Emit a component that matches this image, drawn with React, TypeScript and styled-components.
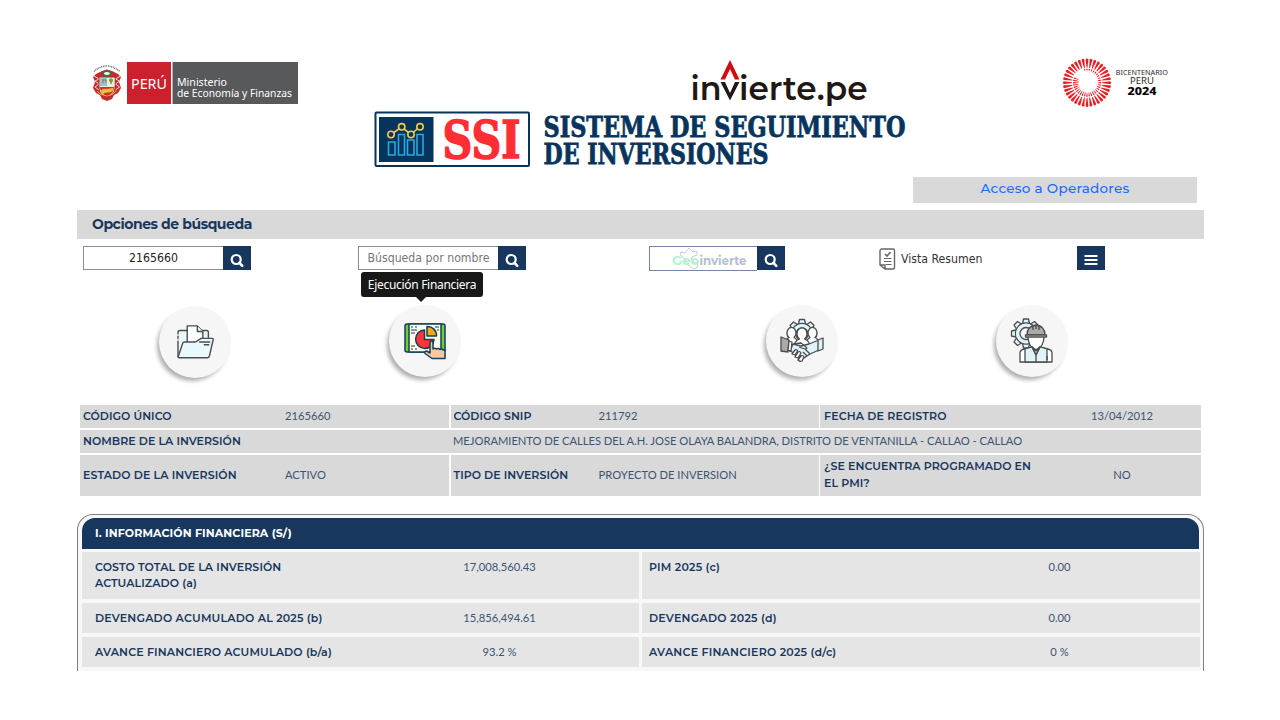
import React from 'react';
import styled, { createGlobalStyle } from 'styled-components';

const navy = '#17375e';
const gotham = "Gotham, Montserrat, Inter, 'Liberation Sans', sans-serif";
const lato = "Lato, 'Liberation Sans', sans-serif";
const tahoma = "Tahoma, 'DejaVu Sans Condensed', 'DejaVu Sans', sans-serif";

const GlobalStyle = createGlobalStyle`
  * { box-sizing: border-box; }
  body { margin: 0; background: #fff; }
  svg { display: block; flex: none; overflow: visible; }
`;

const Page = styled.div`
  width: 1280px;
  height: 671px;
  overflow: hidden;
  padding: 57px 76px 0 77px;
  background: #fff;
  color: ${navy};
  font-family: ${gotham};
`;

const Header = styled.header`
  display: flex;
  justify-content: space-between;
  align-items: flex-start;
  height: 120px;
  padding: 0 35px 0 15px;
`;
const Ministry = styled.div`
  width: 207px;
  height: 44px;
  margin-top: 4px;
`;
const Brand = styled.div`
  display: flex;
  flex-direction: column;
  align-items: flex-end;
  width: 535px;
  margin-right: 81px;
`;
const InvierteBox = styled.div`
  height: 53px;
  margin-right: 41px;
`;
const AccessRow = styled.div`
  display: flex;
  justify-content: flex-end;
  padding-right: 7px;
`;
const AccessLink = styled.a`
  width: 284px;
  height: 26px;
  line-height: 23px;
  text-align: center;
  background: #d9d9d9;
  color: #1a6bff;
  font-size: 13.5px;
  font-weight: 500;
  letter-spacing: 0.27px;
`;
const SectionBar = styled.h2`
  margin: 7px 0;
  height: 29px;
  padding-left: 15px;
  line-height: 28px;
  background: #d9d9d9;
  font-size: 14px;
  font-weight: 700;
  letter-spacing: -0.44px;
`;

const SearchRow = styled.div`
  display: flex;
  height: 26px;
  padding-left: 6px;
  font-family: ${tahoma};
  font-size: 12.2px;
`;
const SearchGroup = styled.div<{ $gap: number }>`
  display: flex;
  margin-right: ${p => p.$gap}px;
`;
const Field = styled.input`
  width: 140px;
  height: 24px;
  padding: 0 3px;
  border: 1px solid #8d8d8d;
  border-right: 0;
  outline: 0;
  color: #222;
  text-align: center;
  font: 12.2px ${tahoma};
  &::placeholder { color: #777; opacity: 1; }
`;
const GeoField = styled.div`
  width: 108px;
  height: 25px;
  border: 1px solid #7188a8;
  border-right: 0;
`;
const SquareButton = styled.button`
  display: flex;
  align-items: center;
  justify-content: center;
  width: 28px;
  height: 24px;
  padding: 4px 0 0;
  border: 0;
  background: ${navy};
`;
const Summary = styled.div`
  display: flex;
  align-items: center;
  gap: 5px;
  width: 198px;
  color: #333;
`;

const Shortcuts = styled.nav`
  display: flex;
  height: 130.5px;
  padding: 33px 0 0 82px;
`;
const Circle = styled.div<{ $gap?: number; $drop?: number }>`
  position: relative;
  display: flex;
  align-items: center;
  justify-content: center;
  flex: none;
  width: 72px;
  height: 72px;
  margin: ${p => p.$drop || 0}px ${p => p.$gap || 0}px 0 0;
  border-radius: 50%;
  background: #f6f6f6;
  box-shadow: -3px 4px 4px -1px rgba(0, 0, 0, 0.32);
`;
const Tooltip = styled.div`
  position: absolute;
  left: -28px;
  top: -33px;
  width: 122px;
  height: 25px;
  border-radius: 3px;
  background: #181818;
  color: #fff;
  text-align: center;
  white-space: nowrap;
  font: 12px/25px 'Segoe UI', 'Noto Sans', sans-serif;
  letter-spacing: -0.3px;
  &::after {
    content: '';
    position: absolute;
    left: 55px;
    top: 25px;
    border: 5px solid transparent;
    border-top-color: #181818;
    border-bottom: 0;
  }
`;

const InfoTable = styled.section`
  display: grid;
  grid-template-columns: 369px 368px 381px;
  grid-template-rows: 23px 23px 41px;
  gap: 2px 1.5px;
  margin: 2px 0 0 3px;
`;
const InfoCell = styled.div<{ $label: number; $wide?: boolean; $center?: boolean }>`
  display: grid;
  grid-template-columns: ${p => p.$label}px 1fr;
  grid-column: ${p => (p.$wide ? '1 / -1' : 'auto')};
  align-items: center;
  padding-left: ${p => (p.$center ? 4 : 3)}px;
  padding-right: ${p => (p.$center ? 3 : 0)}px;
  background: #d9d9d9;
  text-align: ${p => (p.$center ? 'center' : 'left')};
`;
const Label = styled.div<{ $track?: number }>`
  font-size: 11px;
  line-height: 16.8px;
  font-weight: 600;
  letter-spacing: ${p => p.$track ?? 0.04}px;
  white-space: pre-line;
  text-align: left;
`;
const Value = styled.div<{ $track?: number }>`
  font: 11.2px/16px ${lato};
  letter-spacing: ${p => p.$track ?? 0}px;
  color: #3b5473;
  white-space: nowrap;
`;

const Panel = styled.section`
  height: 180px;
  margin: 18px 0 0;
  width: 1127px;
  padding: 3px 4px 0;
  border: 1.5px solid #808080;
  border-bottom: 0;
  border-radius: 16px 16px 0 0;
  background: #f8f8f8;
`;
const PanelTitle = styled.h3`
  height: 31px;
  margin: 0 0 3px;
  padding-left: 13px;
  line-height: 31px;
  border-radius: 13px 13px 0 0;
  background: ${navy};
  color: #fff;
  font-size: 11px;
  font-weight: 700;
  letter-spacing: 0.12px;
`;
const Finance = styled.div`
  display: grid;
  grid-template-columns: 557px 558px;
  grid-template-rows: 47px 30px 30px;
  gap: 4px 3px;
`;
const FinanceCell = styled.div<{ $right?: boolean }>`
  display: grid;
  grid-template-columns: ${p => (p.$right ? '276px 1fr' : '277px 1fr')};
  align-items: start;
  padding: ${p => (p.$right ? '7px 6px 0 7px' : '7px 12px 0 13px')};
  background: #e5e5e5;
  text-align: center;
`;

const MinistryLogo = () => (
  <svg width="207" height="44" viewBox="92 61 207 44">
    <rect x="127" y="62" width="44" height="42" fill="#cc202c" />
    <rect x="172.500" y="62" width="125.500" height="42" fill="#58595b" />
    <path d="M94 71.500q12-11 26 0" fill="none" stroke="#777" strokeWidth="1.600" strokeDasharray="1 .7" />
    <path d="M96 74l6-3 5-1.500 5 1.500 6 3 3 3-2 5 2 6-3 5-4 2-2 4-5 2-5-2-2-4-4-2-3-5 2-6-2-5z" fill="#c52a2d" />
    <path d="M94 76l5 3-4 2 4 3-4 3 4 3M120.500 76l-5 3 4 2-4 3 4 3-4 3" fill="none" stroke="#f3dcd2" strokeWidth="1" />
    <path d="M99 77h16v11q0 7-8 9-8-2-8-9z" fill="#f3e8df" stroke="#a52f24" />
    <path d="M100 78h7v8h-7z" fill="#8cc6dd" />
    <path d="M107.500 78h7v8h-7z" fill="#e9eddc" />
    <path d="M100 87h14q0 7-7 9-6-2-7-8z" fill="#cf2b27" />
    <path d="M103 83v-4m3 4v-3h-3" stroke="#a3702f" fill="none" />
    <path d="M111 84v-3" stroke="#775327" />
    <circle cx="111" cy="80.300" r="2" fill="#67a344" />
    <path d="M100.500 93q1-5 5-4l8-1q0 4-5 4.500-5 0-6 2" fill="#e7bf3b" />
    <ellipse cx="107" cy="73.500" rx="3.800" ry="2.300" fill="#fff" stroke="#28764b" strokeWidth="1.600" />
    <path d="M97 91q3 4 7 4m12-4q-3 4-6 4" fill="none" stroke="#e3ae43" />
    <g fill="#fff" fontFamily="'Noto Sans'">
      <text x="131" y="88.500" fontSize="15" textLength="36" lengthAdjust="spacingAndGlyphs">PERÚ</text>
      <text x="177" y="86.300" fontSize="11.200" textLength="50" lengthAdjust="spacingAndGlyphs">Ministerio</text>
      <text x="177" y="97" fontSize="11.200" textLength="115" lengthAdjust="spacingAndGlyphs">de Economía y Finanzas</text>
    </g>
  </svg>
);

const InvierteLogo = () => (
  <svg width="176" height="50" viewBox="691 57 176 50">
    <g fill="#211814" fontFamily="Montserrat, Inter" fontWeight="600" fontSize="33">
      <text x="690.500" y="99.500" textLength="31" lengthAdjust="spacingAndGlyphs">in</text>
      <text x="739" y="99.500" textLength="128.500" lengthAdjust="spacingAndGlyphs">ierte.pe</text>
    </g>
    <path d="M720.500 82h4.500l5 11 5-11h4.500L730 100.500z" fill="#211814" />
    <path d="M720.500 79.500L730 60l9.500 19.500H735L730 69l-5 10.500z" fill="#d20a11" />
  </svg>
);

const SystemLogo = () => (
  <svg width="535" height="58" viewBox="373 110 535 58">
    <rect x="375.500" y="112.500" width="153.500" height="53.500" rx="1" fill="#fff" stroke="#07345c" strokeWidth="2" />
    <rect x="379" y="117" width="54.500" height="45" fill="#07345c" />
    <g fill="none" stroke="#27a9e1" strokeWidth="1.600">
      <path d="M388.500 142h6.500v13h-6.500zM398.500 134.500h6v20.500h-6zM407.500 140h6.500v15h-6.500zM417 134.500h6V155h-6z" />
    </g>
    <g stroke="#f4cb3d" strokeWidth="1.600">
      <path d="M391 134.500l10.500-7.500 9.500 7.500 9-8" fill="none" />
      <g fill="#07345c">
        <circle cx="391" cy="134.500" r="3.200" /><circle cx="401.700" cy="126.800" r="3.200" />
        <circle cx="411" cy="134.500" r="3.200" /><circle cx="420" cy="126.800" r="3.200" />
      </g>
    </g>
    <g fontFamily="'Roboto Slab', 'DejaVu Serif', serif" fontWeight="700">
      <text x="442.500" y="158" fontSize="53" fill="#ff2e35" stroke="#ff2e35" strokeWidth="1.600" textLength="78" lengthAdjust="spacingAndGlyphs">SSI</text>
      <g fontSize="28" fill="#07345c" stroke="#07345c" strokeWidth=".8">
        <text x="543.500" y="136.700" textLength="362" lengthAdjust="spacingAndGlyphs">SISTEMA DE SEGUIMIENTO</text>
        <text x="543.500" y="164" textLength="225" lengthAdjust="spacingAndGlyphs">DE INVERSIONES</text>
      </g>
    </g>
  </svg>
);

const rays = Array.from({ length: 36 }, (_, i) => i * 10);
const BicentennialLogo = () => (
  <svg width="107" height="52" viewBox="1062 57 107 52">
    <g transform="translate(1087 82.700)" fill="#ed1c24">
      {rays.map(a => (
        <path key={a} d="M-.4-15h.8L1.450-23.300q-1.450-1.800-2.900 0z" transform={`rotate(${a})`} />
      ))}
      {rays.slice(0, 31).map((a, i) => (
        <path key={a} d={`M-.2 ${-12 + i * 0.12}h.4L.7-14h-1.400z`} transform={`rotate(${a - 10})`} />
      ))}
    </g>
    <g textAnchor="middle" fill="#2a2a2a" fontFamily="'Noto Sans'">
      <text x="1141.800" y="74.800" fontSize="6.500" textLength="52" lengthAdjust="spacingAndGlyphs">BICENTENARIO</text>
      <text x="1142" y="84" fontSize="8.500" textLength="24" lengthAdjust="spacingAndGlyphs">PERÚ</text>
      <text x="1142" y="95" fontSize="11" fontWeight="800" fill="#000" textLength="29" lengthAdjust="spacingAndGlyphs">2024</text>
    </g>
  </svg>
);

const SearchIcon = () => (
  <svg width="14" height="14" viewBox="0 0 14 14" fill="none" stroke="#fff">
    <circle cx="6.200" cy="6.500" r="4.500" strokeWidth="2.200" />
    <path d="M9.500 10l2.800 2.800" strokeWidth="2.600" strokeLinecap="round" />
  </svg>
);
const MenuIcon = () => (
  <svg width="14" height="12" viewBox="0 0 14 12"><path d="M.5 2h13M.5 6h13M.5 10h13" stroke="#fff" strokeWidth="2" /></svg>
);
const GeoLogo = () => (
  <svg width="106" height="23" viewBox="0 0 106 23">
    <path d="M31 5l4 1 4-5 4 4 4-1v4l-5 2-1 4 4 2 2-1 1 5-4 2-6-4-3-6-5-4z" fill="none" stroke="#c3cfdd" />
    <g fontFamily="Montserrat, Inter" fontWeight="700" fontSize="12">
      <text x="22" y="17.500" fill="#b6efd2" textLength="27" lengthAdjust="spacingAndGlyphs">Geo</text>
      <text x="49.500" y="17.500" fill="#b4c0d0" textLength="47" lengthAdjust="spacingAndGlyphs">invierte</text>
    </g>
  </svg>
);
const SummaryIcon = () => (
  <svg width="17" height="22" viewBox="0 0 17 22" fill="none" stroke="#666" strokeWidth="1.400">
    <path d="M3 1h11q1.500 0 1.500 1.500v17q0 1.500-1.500 1.500H6l-5-4V3q0-2 2-2zM1 17h5v4" />
    <path d="M5 10.500h7.500M5 13.500h7.500M7 16.500h5.500" strokeWidth="1.200" />
    <path d="M6 6l2 2 3.500-4" strokeWidth="1.600" />
  </svg>
);

const FolderIcon = () => (
  <svg width="39" height="35" viewBox="0 0 42 38" fill="#e9f8fd" stroke="#4c4c4c" strokeWidth="1.500" strokeLinejoin="round">
    <path d="M2 35V8q0-2 2-2h29q2 0 2 2v8" />
    <path d="M12 21V1h11l6 6v12z" fill="#fff" /><path d="M23 1v6h6" />
    <path d="M2 35l5-15q.500-1.500 2-1.500h12l6-4h12q1.500 0 1.200 1.500L36 34q-.5 1.500-2 1.500H3q-1 0-1-1" />
    <path d="M25 18.500h12M30 21.500h6" /><path d="M2 10v7" stroke="#fff" strokeDasharray="2 3" />
  </svg>
);
const ChartIcon = () => (
  <svg width="43" height="38" viewBox="0 0 43 38" stroke="#123f5c" strokeWidth="1.500" strokeLinejoin="round">
    <rect x="1" y="2" width="40" height="28" rx="2" fill="#6fcf35" />
    <path d="M5 2h32v28H5z" fill="#fffbea" />
    <path d="M7 5h2m2 0h2m-6 3h6m-6 3h4M31 5h4m-2 3h2M7 24h4m-4 3h2m2 0h2" fill="none" strokeWidth="1.200" />
    <path d="M20.500 8A9.200 9.200 0 1 0 30 17.500h-9.500z" fill="#ff3438" />
    <path d="M23 4.500a9 9 0 0 1 9.500 9.500H23z" fill="#faa61a" />
    <path d="M26 31V21q0-2 1.500-2t1.500 2v6q2-1.500 3.500 0 2-1 3.500 .500 2-1 3 .5l2 0v8.500H28l-7-5q-1-2 1.500-2.500z" fill="#fbc7a0" />
  </svg>
);

const gearTeeth = Array.from({ length: 8 }, (_, i) => i * 45);
const Gear = ({ x, y }: { x: number; y: number }) => (
  <g transform={`translate(${x} ${y})`} strokeLinejoin="round">
    <g>{gearTeeth.map(a => <path key={a} d="M-3.500-10l1-4.500h5l1 4.500" transform={`rotate(${a})`} />)}</g>
    <circle r="10.500" /><circle r="10" stroke="none" /><circle r="6" fill="#f6f6f6" />
  </g>
);

const HandshakeIcon = () => (
  <svg width="44" height="44" viewBox="0 0 44 44" fill="#dff4fa" stroke="#4c4c4c" strokeWidth="1.300" strokeLinejoin="round">
    <Gear x={22} y={15} />
    <g fill="#fff">
      <path d="M5 26q0-5 4-7.500a4.500 5.500 0 1 1 5 0q4 2 4 7.500zM26 26q0-5 4-7.500a4.500 5.500 0 1 1 5 0q4 2 4 7.500z" />
      <path d="M14 28q0-6 5.500-8a5 6 0 1 1 5 0q5.500 2 5.500 8z" />
    </g>
    <path d="M13 25l8 2 8-2 10-4v10l-9 4-6 4-10-5-4-2z" />
    <path d="M1 18l8 3-1 12-7-1z" fill="#aaa" /><path d="M9 22l3 1-1 9-3-.500z" fill="#fff" />
    <path d="M38 21l5-2v11l-5 2z" />
    <path d="M13 25l8-1 5 4q2 2-1 2l-6-2M25 30l5 5M23 33l4 4M20 36l3 3" fill="none" />
    <path d="M12 35l3-4q2-1 2.500 1L15 36zM15 38l3-5q2-1 3 1l-3 5zM18 41l3-4q2-1 3 1l-2 4q-2 1-4-1z" fill="#fff" />
  </svg>
);
const EngineerIcon = () => (
  <svg width="43" height="44" viewBox="0 0 43 44" fill="#dff4fa" stroke="#4c4c4c" strokeWidth="1.300" strokeLinejoin="round">
    <Gear x={15} y={14.5} />
    <path d="M17 17q0 11 8 14 8-3 8-14z" fill="#fff" />
    <path d="M9 43v-9q0-3 4-4l8-2 4 3 4-3 8 2q4 1 4 4v9z" fill="#fff" />
    <path d="M14 43V30l7-2 4 8 4-8 7 2v13z" />
    <path d="M21 28l4 4 4-4-4 8zM25 36v7M36 37v4" fill="none" />
    <path d="M16 16q0-9 9-10 9 1 9 10z" fill="#aaa" /><path d="M14.500 16h21v2h-21zM22 6v5m6-5v5m-3-5v4" />
  </svg>
);

const financeRows = [
  [['COSTO TOTAL DE LA INVERSIÓN\nACTUALIZADO (a)', 0.1], '17,008,560.43', ['PIM 2025 (c)', 0.22], '0.00'],
  [['DEVENGADO ACUMULADO AL 2025 (b)', 0.2], '15,856,494.61', ['DEVENGADO 2025 (d)', 0.25], '0.00'],
  [['AVANCE FINANCIERO ACUMULADO (b/a)', 0.15], '93.2 %', ['AVANCE FINANCIERO 2025 (d/c)', 0.23], '0 %'],
] as const;

export default function App() {
  return (
    <>
      <GlobalStyle />
      <Page>
        <Header>
          <Ministry><MinistryLogo /></Ministry>
          <Brand>
            <InvierteBox><InvierteLogo /></InvierteBox>
            <SystemLogo />
          </Brand>
          <BicentennialLogo />
        </Header>
        <AccessRow><AccessLink>Acceso a Operadores</AccessLink></AccessRow>
        <SectionBar>Opciones de búsqueda</SectionBar>
        <SearchRow>
          <SearchGroup $gap={107}>
            <Field defaultValue="2165660" />
            <SquareButton><SearchIcon /></SquareButton>
          </SearchGroup>
          <SearchGroup $gap={123}>
            <Field placeholder="Búsqueda por nombre" />
            <SquareButton><SearchIcon /></SquareButton>
          </SearchGroup>
          <SearchGroup $gap={94}>
            <GeoField><GeoLogo /></GeoField>
            <SquareButton><SearchIcon /></SquareButton>
          </SearchGroup>
          <Summary><SummaryIcon />Vista Resumen</Summary>
          <SquareButton><MenuIcon /></SquareButton>
        </SearchRow>
        <Shortcuts>
          <Circle $gap={158} $drop={1}><FolderIcon /></Circle>
          <Circle $gap={305}>
            <ChartIcon />
            <Tooltip>Ejecución Financiera</Tooltip>
          </Circle>
          <Circle $gap={158}><HandshakeIcon /></Circle>
          <Circle><EngineerIcon /></Circle>
        </Shortcuts>
        <InfoTable>
          <InfoCell $label={202}><Label>CÓDIGO ÚNICO</Label><Value>2165660</Value></InfoCell>
          <InfoCell $label={145}><Label>CÓDIGO SNIP</Label><Value>211792</Value></InfoCell>
          <InfoCell $label={222} $center><Label $track={0.15}>FECHA DE REGISTRO</Label><Value>13/04/2012</Value></InfoCell>
          <InfoCell $label={370} $wide>
            <Label>NOMBRE DE LA INVERSIÓN</Label>
            <Value $track={-0.03}>MEJORAMIENTO DE CALLES DEL A.H. JOSE OLAYA BALANDRA, DISTRITO DE VENTANILLA - CALLAO - CALLAO</Value>
          </InfoCell>
          <InfoCell $label={202}><Label $track={0.1}>ESTADO DE LA INVERSIÓN</Label><Value>ACTIVO</Value></InfoCell>
          <InfoCell $label={145}><Label>TIPO DE INVERSIÓN</Label><Value>PROYECTO DE INVERSION</Value></InfoCell>
          <InfoCell $label={222} $center><Label $track={0.07}>{'¿SE ENCUENTRA PROGRAMADO EN\nEL PMI?'}</Label><Value>NO</Value></InfoCell>
        </InfoTable>
        <Panel>
          <PanelTitle>I. INFORMACIÓN FINANCIERA (S/)</PanelTitle>
          <Finance>
            {financeRows.map(([left, leftValue, right, rightValue]) => (
              <React.Fragment key={left[0]}>
                <FinanceCell>
                  <Label $track={left[1]}>{left[0]}</Label><Value>{leftValue}</Value>
                </FinanceCell>
                <FinanceCell $right>
                  <Label $track={right[1]}>{right[0]}</Label><Value>{rightValue}</Value>
                </FinanceCell>
              </React.Fragment>
            ))}
          </Finance>
        </Panel>
      </Page>
    </>
  );
}
